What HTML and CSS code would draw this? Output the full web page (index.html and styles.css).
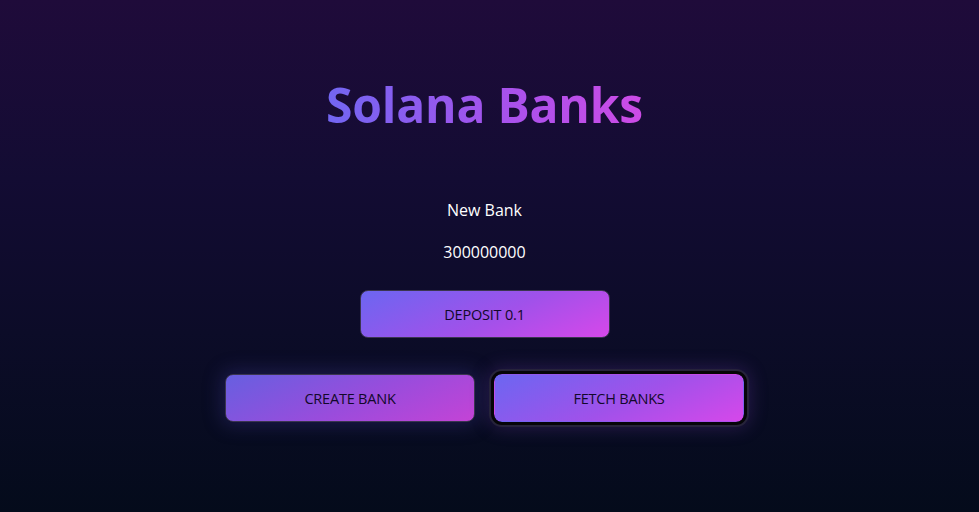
FILE: index.html
```html
<!DOCTYPE html>
<html lang="en">
<head>
<meta charset="utf-8">
<title>Solana Banks</title>
<link rel="stylesheet" href="styles.css">
</head>
<body>
<main class="app">
  <h1 class="title">Solana Banks</h1>
  <section class="bank">
    <p class="bank-name">New Bank</p>
    <p class="bank-balance">300000000</p>
    <button class="btn btn-deposit">DEPOSIT 0.1</button>
  </section>
  <div class="actions">
    <button class="btn btn-create">CREATE BANK</button>
    <button class="btn btn-fetch">FETCH BANKS</button>
  </div>
</main>
</body>
</html>
```
FILE: styles.css
```css
* { box-sizing: border-box; }
html, body { margin: 0; height: 100%; }
body {
  background: linear-gradient(180deg, #1f0b3a 0%, #130c33 35%, #0c0c28 65%, #040b1b 100%);
  font-family: "Open Sans", "Noto Sans", sans-serif;
  color: #fff;
}
.app {
  display: flex;
  flex-direction: column;
  align-items: center;
  padding-top: 76px;
  padding-right: 10px;
}
.title {
  margin: 0;
  font-size: 48px;
  line-height: 58px;
  font-weight: 700;
  letter-spacing: -0.2px;
  background: linear-gradient(90deg, #7266f2 0%, #a652ec 55%, #cd4be6 100%);
  -webkit-background-clip: text;
  background-clip: text;
  color: transparent;
}
.bank {
  display: flex;
  flex-direction: column;
  align-items: center;
  margin-top: 64px;
}
.bank-name, .bank-balance {
  margin: 0;
  font-size: 16px;
  line-height: 24px;
}
.bank-balance { margin-top: 18px; }
.btn {
  width: 250px;
  height: 48px;
  border: 1px solid #3b3550;
  border-radius: 8px;
  font-family: inherit;
  font-size: 14.5px;
  font-weight: 500;
  color: #12082a;
  letter-spacing: -0.2px;
  background: linear-gradient(155deg, #6c66f1 0%, #a151ea 55%, #d648ea 100%);
  cursor: pointer;
}
.btn-deposit { margin-top: 26px; }
.actions {
  display: flex;
  gap: 19px;
  margin-top: 36px;
}
.btn-create {
  background: linear-gradient(155deg, #675fe0 0%, #9a4cdc 55%, #c443d6 100%);
  box-shadow: 0 0 18px 4px rgba(60, 55, 140, 0.35);
}
.btn-fetch {
  border-color: transparent;
  outline: 3px solid #050508;
  box-shadow: 0 0 0 5px #26233a, 0 0 18px 6px rgba(110, 60, 170, 0.3);
}
```
